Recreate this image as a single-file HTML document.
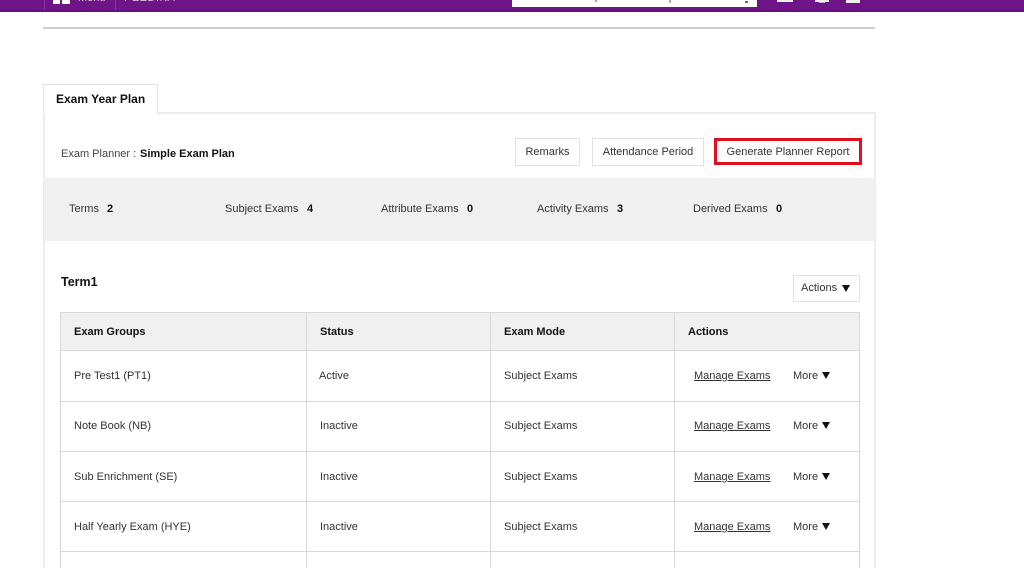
<!DOCTYPE html>
<html>
<head>
<meta charset="utf-8">
<style>
html,body{margin:0;padding:0;background:#fff}
body{width:1024px;height:568px;position:relative;overflow:hidden;font-family:"Liberation Sans",Arial,sans-serif;font-size:11px;color:#333}
div,a{position:absolute;white-space:nowrap}
.t{line-height:14px}
.b{font-weight:bold;color:#111}
.line{background:#d8d8d8}
.btn{border:1px solid #e2e2e2;box-sizing:border-box;text-align:center;background:#fff}
a{color:#333;text-decoration:underline}
.tri{width:0;height:0;border-left:4px solid transparent;border-right:4px solid transparent;border-top:7px solid #111}
</style>
</head>
<body>
<!-- header -->
<div style="left:0;top:0;width:1024px;height:10px;background:#6f1487"></div>
<div style="left:0;top:10px;width:1024px;height:2px;background:#660f80"></div>
<div style="left:44px;top:0;width:1px;height:10px;background:#85399b"></div>
<div style="left:115px;top:0;width:1px;height:10px;background:#85399b"></div>
<div style="left:53px;top:0;width:7px;height:4px;background:#fff;border-radius:0 0 1px 1px"></div>
<div style="left:62px;top:0;width:8px;height:4px;background:#fff;border-radius:0 0 1px 1px"></div>
<div style="left:78px;top:-9px;color:#d9c4e0;font-size:11px;line-height:14px">Menu</div>
<div style="left:124px;top:-9px;color:#d9c4e0;font-size:11px;line-height:14px;letter-spacing:.5px">PEEDIKA</div>
<div style="left:512px;top:0;width:245px;height:7px;background:#fff"></div>
<div style="left:595px;top:0;width:2px;height:2px;background:#aaa"></div>
<div style="left:669px;top:0;width:2px;height:3px;background:#aaa"></div>
<div style="left:745px;top:1px;width:3px;height:2px;background:#666"></div>
<div style="left:777px;top:0;width:16px;height:2px;background:#eee"></div>
<div style="left:815px;top:0;width:14px;height:2px;background:#eee"></div>
<div style="left:819px;top:2px;width:6px;height:1px;background:#c9aed2"></div>
<div style="left:846px;top:0;width:14px;height:3px;background:#eee"></div>

<!-- rule -->
<div style="left:43px;top:27px;width:832px;height:2px;background:#cfcfcf"></div>

<!-- panel -->
<div style="left:43px;top:113px;width:2px;height:455px;background:#ececec"></div>
<div style="left:874px;top:113px;width:2px;height:455px;background:#ececec"></div>
<div style="left:157px;top:112px;width:719px;height:2px;background:#ececec"></div>
<div style="left:43px;top:84px;width:115px;height:30px;box-sizing:border-box;border:1px solid #e4e4e4;border-bottom:0;background:#fff"></div>
<div class="t b" style="left:56px;top:92px;font-size:12px">Exam Year Plan</div>

<div class="t" style="left:61px;top:147px;color:#444">Exam Planner :</div>
<div class="t b" style="left:140px;top:147px">Simple Exam Plan</div>

<div class="btn t" style="left:515px;top:138px;width:65px;height:28px;line-height:26px">Remarks</div>
<div class="btn t" style="left:592px;top:138px;width:112px;height:28px;line-height:26px">Attendance Period</div>
<div class="btn t" style="left:714px;top:138px;width:148px;height:27px;line-height:23px;border:3px solid #e2101f">Generate Planner Report</div>

<!-- stats -->
<div style="left:44px;top:178px;width:831px;height:63px;background:#f0f0f0"></div>
<div class="t" style="left:69px;top:202px">Terms</div><div class="t b" style="left:107px;top:202px">2</div>
<div class="t" style="left:225px;top:202px">Subject Exams</div><div class="t b" style="left:307px;top:202px">4</div>
<div class="t" style="left:381px;top:202px">Attribute Exams</div><div class="t b" style="left:467px;top:202px">0</div>
<div class="t" style="left:537px;top:202px">Activity Exams</div><div class="t b" style="left:617px;top:202px">3</div>
<div class="t" style="left:693px;top:202px">Derived Exams</div><div class="t b" style="left:776px;top:202px">0</div>

<div class="t b" style="left:61px;top:275px;font-size:12.5px">Term1</div>
<div class="btn" style="left:793px;top:275px;width:67px;height:27px"></div>
<div class="t" style="left:801px;top:281px">Actions</div>
<div class="tri" style="left:842px;top:285px"></div>

<!-- table -->
<div style="left:61px;top:313px;width:798px;height:37px;background:#f0f0f0"></div>
<div class="line" style="left:60px;top:312px;width:800px;height:1px"></div>
<div class="line" style="left:60px;top:350px;width:800px;height:1px"></div>
<div class="line" style="left:60px;top:401px;width:800px;height:1px"></div>
<div class="line" style="left:60px;top:451px;width:800px;height:1px"></div>
<div class="line" style="left:60px;top:501px;width:800px;height:1px"></div>
<div class="line" style="left:60px;top:551px;width:800px;height:1px"></div>
<div class="line" style="left:60px;top:312px;width:1px;height:256px"></div>
<div class="line" style="left:306px;top:312px;width:1px;height:256px"></div>
<div class="line" style="left:490px;top:312px;width:1px;height:256px"></div>
<div class="line" style="left:674px;top:312px;width:1px;height:256px"></div>
<div class="line" style="left:859px;top:312px;width:1px;height:256px"></div>

<div class="t b" style="left:74px;top:325px">Exam Groups</div>
<div class="t b" style="left:320px;top:325px">Status</div>
<div class="t b" style="left:504px;top:325px">Exam Mode</div>
<div class="t b" style="left:688px;top:325px">Actions</div>

<div class="t" style="left:74px;top:369px">Pre Test1 (PT1)</div>
<div class="t" style="left:319px;top:369px">Active</div>
<div class="t" style="left:504px;top:369px">Subject Exams</div>
<a class="t" style="left:694px;top:369px">Manage Exams</a>
<div class="t" style="left:793px;top:369px">More</div>
<div class="tri" style="left:822px;top:372px"></div>

<div class="t" style="left:74px;top:419px">Note Book (NB)</div>
<div class="t" style="left:320px;top:419px">Inactive</div>
<div class="t" style="left:504px;top:419px">Subject Exams</div>
<a class="t" style="left:694px;top:419px">Manage Exams</a>
<div class="t" style="left:793px;top:419px">More</div>
<div class="tri" style="left:822px;top:422px"></div>

<div class="t" style="left:74px;top:470px">Sub Enrichment (SE)</div>
<div class="t" style="left:320px;top:470px">Inactive</div>
<div class="t" style="left:504px;top:470px">Subject Exams</div>
<a class="t" style="left:694px;top:470px">Manage Exams</a>
<div class="t" style="left:793px;top:470px">More</div>
<div class="tri" style="left:822px;top:473px"></div>

<div class="t" style="left:74px;top:520px">Half Yearly Exam (HYE)</div>
<div class="t" style="left:320px;top:520px">Inactive</div>
<div class="t" style="left:504px;top:520px">Subject Exams</div>
<a class="t" style="left:694px;top:520px">Manage Exams</a>
<div class="t" style="left:793px;top:520px">More</div>
<div class="tri" style="left:822px;top:523px"></div>
</body>
</html>
